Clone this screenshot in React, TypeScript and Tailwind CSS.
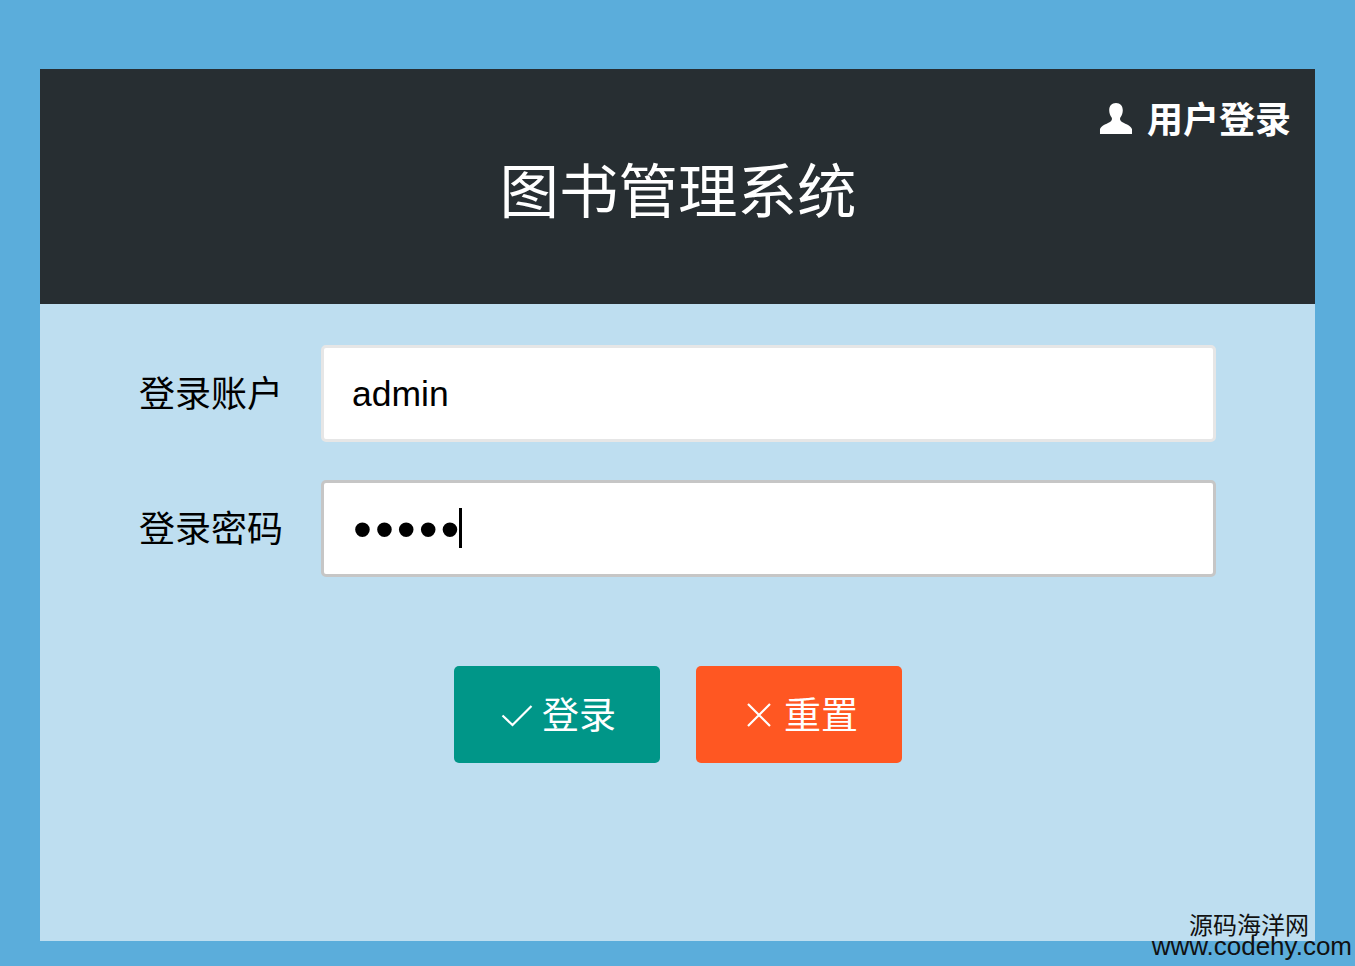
import React from "react";

const cjk = "font-['Liberation_Sans','Noto_Sans_CJK_SC',sans-serif]";

function UserIcon() {
  return (
    <svg className="-mt-[5px]" width="34" height="33" viewBox="0 0 34 34" fill="#ffffff">
      <path d="M17 1c-4.500 0-7 3-7 7.500 0 3 1 5.500 2.500 7.500.5 1 .5 2.500-.5 3.500C9.500 22 1 24 .5 28v5h33v-5c-.5-4-9-6-11.500-8.500-1-1-1-2.500-.5-3.500 1.500-2 2.500-4.500 2.500-7.500C24 4 21.500 1 17 1z" />
    </svg>
  );
}

function CheckIcon() {
  return (
    <svg width="32" height="24" viewBox="0 0 32 24" fill="none" stroke="#ffffff" strokeWidth="2.200">
      <path d="M1.500 12.500 11.500 22 30.500 3" />
    </svg>
  );
}

function CloseIcon() {
  return (
    <svg width="26" height="26" viewBox="0 0 26 26" fill="none" stroke="#ffffff" strokeWidth="2.200">
      <path d="M2 2l22 22M24 2 2 24" />
    </svg>
  );
}

export default function App() {
  return (
    <div className={`relative h-[966px] overflow-hidden bg-[#5badDB] px-10 pt-[69px] ${cjk}`}>
      <header className="h-[235px] bg-[#272e32] pt-[27px] pr-[24px] text-white">
        <div className="flex items-center justify-end gap-[14px] h-[50px]">
          <UserIcon />
          <span className="text-[36px] font-bold leading-none">用户登录</span>
        </div>
        <h1 className="mt-[7px] pl-[25px] text-center text-[59.500px] leading-[80px] font-normal">图书管理系统</h1>
      </header>

      <main className="h-[637px] bg-[#bedef0] pt-[41px] pl-[99px] pr-[99px]">
        <div className="flex items-center h-[97px]">
          <label className="w-[182px] pt-[3px] text-[36px] text-black">登录账户</label>
          <input
            readOnly
            value="admin"
            className="h-full flex-1 rounded-[5px] border-[3px] border-[#e6e6e6] bg-white pt-[2px] pl-[28px] text-[35.500px] text-black outline-none"
          />
        </div>
        <div className="mt-[38px] flex items-center h-[97px]">
          <label className="w-[182px] pt-[3px] text-[36px] text-black">登录密码</label>
          <div className="relative h-full flex-1">
            <input
              readOnly
              type="password"
              value="admin"
              className="h-full w-full rounded-[5px] border-[3px] border-[#c6c6c6] bg-white pl-[29px] text-[54px] tracking-[3px] text-black outline-none"
            />
            <span className="absolute left-[138px] top-[28px] h-[40px] w-[3px] bg-black" />
          </div>
        </div>
        <div className="mt-[89px] flex justify-center gap-[36px] pl-[1px]">
          <button className="flex h-[97px] w-[206px] items-center justify-center gap-[9px] rounded-[5px] bg-[#009688] pl-[3px] text-[37px] text-white">
            <CheckIcon />
            <span className="pt-[4px]">登录</span>
          </button>
          <button className="flex h-[97px] w-[206px] items-center justify-center gap-[12px] rounded-[5px] bg-[#ff5722] pl-[6px] text-[37px] text-white">
            <CloseIcon />
            <span className="pt-[4px]">重置</span>
          </button>
        </div>
      </main>

      <div className="absolute right-[3px] bottom-[9px] text-[26px] leading-[22px] text-[#111111]">
        <div className="pr-[43px] text-right text-[24px]">源码海洋网</div>
        <div className="-mt-[2px]">www.codehy.com</div>
      </div>
    </div>
  );
}
